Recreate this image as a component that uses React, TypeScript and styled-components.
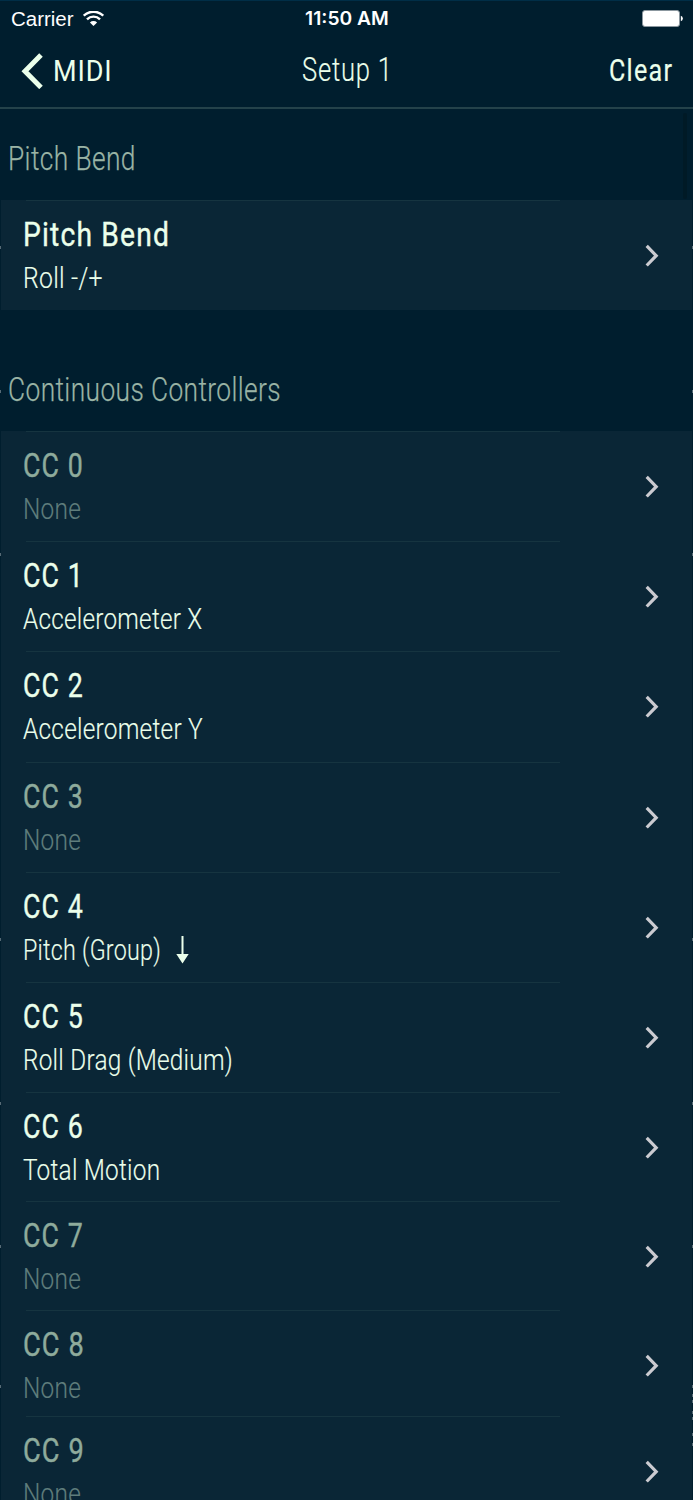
import React, { useLayoutEffect, useRef, useState } from "react";
import styled, { createGlobalStyle } from "styled-components";

const colors = {
  page: "#001e2e",
  row: "#0a2636",
  bright: "#ebffeb",
  section: "#9ab4a5",
  dim: "#8eab9c",
  dimmer: "#5f7d7c",
  line: "#163440",
  chevron: "#cbcbd1",
};

const GlobalStyle = createGlobalStyle`
  * { box-sizing: border-box; }
  html, body { margin: 0; background: ${colors.page}; }
  body { height: 1500px; overflow: hidden; font-family: Roboto, "Liberation Sans", sans-serif; }
`;

const Screen = styled.main`
  position: relative;
  width: 693px;
  height: 1500px;
  overflow: hidden;
  background: ${colors.page};
  border-top: 1px solid #002e47;
`;

const StatusBar = styled.div`
  display: grid;
  grid-template-columns: 1fr auto 1fr;
  align-items: center;
  height: 34px;
  padding: 0 10px 0 11px;
`;

const Carrier = styled.div`
  display: flex;
  align-items: center;
  gap: 9px;
`;

const Clock = styled.div`
  padding-top: 1px;
`;

const BatterySlot = styled.div`
  display: flex;
  justify-content: flex-end;
`;

const NavBar = styled.header`
  display: grid;
  grid-template-columns: 1fr auto 1fr;
  align-items: center;
  height: 74px;
  padding: 0 21px 1px 21px;
  border-bottom: 2px solid #24424a;
`;

const NavTitle = styled.div`
  padding-bottom: 2px;
`;

const NavButton = styled.button<{ $end?: boolean }>`
  display: flex;
  align-items: center;
  justify-self: ${(p) => (p.$end ? "end" : "start")};
  gap: 9px;
  padding: 0;
  border: 0;
  background: none;
  font: inherit;
`;

const SectionHeading = styled.h2<{ $height: number }>`
  display: flex;
  align-items: flex-end;
  height: ${(p) => p.$height}px;
  margin: 0;
  padding: 0 0 20px 7.5px;
`;

const List = styled.ul`
  margin: 0 1px;
  padding: 0;
  list-style: none;
  background: ${colors.row};
`;

const Row = styled.li<{ $height: number }>`
  display: flex;
  align-items: flex-start;
  justify-content: space-between;
  height: ${(p) => p.$height}px;
  padding: 0 32px 0 22px;
  background: linear-gradient(${colors.line}, ${colors.line}) 25px 0 / 534px 1px no-repeat;
`;

const RowText = styled.div`
  display: flex;
  flex-direction: column;
  gap: 6px;
  padding-top: 14px;
`;

const Detail = styled.div`
  display: flex;
  align-items: center;
  gap: 15px;
`;

const ChevronSlot = styled.div`
  display: flex;
  align-items: center;
  height: 112px;
`;

const Label = styled.span<{ $family: string; $size: number; $line: number; $weight: number; $thicken: number; $color: string; $spacing: number; $width: number }>`
  display: block;
  width: ${(p) => p.$width}px;
  height: ${(p) => p.$line}px;
  font-family: ${(p) => p.$family};
  font-size: ${(p) => p.$size}px;
  line-height: ${(p) => p.$line}px;
  font-weight: ${(p) => p.$weight};
  -webkit-text-stroke: ${(p) => p.$thicken}px ${(p) => p.$color};
  letter-spacing: ${(p) => p.$spacing}px;
  color: ${(p) => p.$color};
  white-space: nowrap;
`;

const Condensed = styled.span`
  display: inline-block;
  transform-origin: 0 50%;
`;

const Tick = styled.i<{ $y: number; $right?: boolean }>`
  position: absolute;
  top: ${(p) => p.$y}px;
  ${(p) => (p.$right ? "right: 0;" : "left: 0;")}
  width: 1px;
  height: 3px;
  background: #566a75;
`;

const ScrollShade = styled.div`
  position: absolute;
  top: 112px;
  right: 6px;
  width: 4px;
  height: 86px;
  border-radius: 2px;
  background: #001a26;
`;

const ui = 'Roboto, "Liberation Sans", sans-serif';
const system = '"Liberation Sans", sans-serif';

const kinds = {
  status: { family: system, size: 19.5, line: 34, weight: 400, spacing: 0, thicken: 0 },
  clock: { family: "Inter, sans-serif", size: 19, line: 34, weight: 600, spacing: 0, thicken: 0 },
  nav: { family: ui, size: 30, line: 40, weight: 400, spacing: 1, thicken: 0 },
  navStrong: { family: ui, size: 30.5, line: 40, weight: 400, spacing: 1.5, thicken: 0.2 },
  heading: { family: ui, size: 33, line: 40, weight: 300, spacing: 1, thicken: 0.15 },
  section: { family: ui, size: 34, line: 44, weight: 300, spacing: 0.5, thicken: 0.25 },
  title: { family: ui, size: 34, line: 40, weight: 400, spacing: 1.4, thicken: 0.4 },
  detail: { family: ui, size: 30, line: 36, weight: 300, spacing: 0.3, thicken: 0.15 },
};

type TextProps = { kind: keyof typeof kinds; width: number; color: string; children: string };

/* Narrows a label horizontally so that it fills exactly the given width. */
function FitText({ kind, width, color, children }: TextProps) {
  const ref = useRef<HTMLSpanElement>(null);
  const [scale, setScale] = useState(1);
  const k = kinds[kind];
  useLayoutEffect(() => {
    if (ref.current) setScale(width / (ref.current.offsetWidth - k.spacing));
  }, [width, children, k.spacing]);
  return (
    <Label $family={k.family} $size={k.size} $line={k.line} $weight={k.weight} $thicken={k.thicken} $spacing={k.spacing} $color={color} $width={width}>
      <Condensed ref={ref} style={{ transform: `scaleX(${scale})` }}>{children}</Condensed>
    </Label>
  );
}

const WifiIcon = () => (
  <svg width="21" height="16" viewBox="0 0 21 16" fill="none" stroke="#fff" strokeWidth="2.4">
    <path d="M.8 4.7a13.8 13.8 0 0 1 19.4 0" />
    <path d="M4 8.3a9.2 9.2 0 0 1 13 0" />
    <path d="M10.5 15 6.9 11.5a5.1 5.1 0 0 1 7.2 0z" fill="#fff" stroke="none" />
  </svg>
);

const BatteryIcon = () => (
  <svg width="41" height="17" viewBox="0 0 41 17">
    <rect x="0.5" y="0.5" width="37" height="16" rx="2.5" fill="#fff" stroke="#8b979f" />
    <path d="M38.8 5.8a2.8 2.8 0 0 1 0 5.4z" fill="#fff" />
  </svg>
);

const BackIcon = () => (
  <svg width="23" height="36" viewBox="0 0 23 36" fill="none" stroke={colors.bright} strokeWidth="5">
    <path d="M20 2 4 18.2 20 34.4" />
  </svg>
);

const Chevron = () => (
  <svg width="16" height="24" viewBox="0 0 16 24" fill="none" stroke={colors.chevron} strokeWidth="3.2">
    <path d="M2.7 1.9 12.2 11.7 2.7 21.5" />
  </svg>
);

const DownArrow = () => (
  <svg width="13" height="28" viewBox="0 0 13 28" fill={colors.bright}>
    <path d="M5.5 0h2v18h5.2L6.5 27.5.3 18h5.2z" />
  </svg>
);

type Controller = { title: string; width: number; detail: string; detailWidth: number; off?: boolean; arrow?: boolean; height: number };

const controllers: Controller[] = [
  { title: "CC 0", width: 59.5, detail: "None", detailWidth: 57.5, off: true, height: 110 },
  { title: "CC 1", width: 59.5, detail: "Accelerometer X", detailWidth: 179.5, height: 110 },
  { title: "CC 2", width: 59.5, detail: "Accelerometer Y", detailWidth: 179.5, height: 111 },
  { title: "CC 3", width: 59.5, detail: "None", detailWidth: 57.5, off: true, height: 110 },
  { title: "CC 4", width: 59.5, detail: "Pitch (Group)", detailWidth: 138, arrow: true, height: 110 },
  { title: "CC 5", width: 59.5, detail: "Roll Drag (Medium)", detailWidth: 210, height: 110 },
  { title: "CC 6", width: 59.5, detail: "Total Motion", detailWidth: 137, height: 109 },
  { title: "CC 7", width: 59.5, detail: "None", detailWidth: 57.5, off: true, height: 109 },
  { title: "CC 8", width: 60.5, detail: "None", detailWidth: 57.5, off: true, height: 106 },
  { title: "CC 9", width: 60.5, detail: "None", detailWidth: 57.5, off: true, height: 110 },
];

function ControllerRow({ item }: { item: Controller }) {
  return (
    <Row $height={item.height}>
      <RowText>
        <FitText kind="title" width={item.width} color={item.off ? colors.dim : colors.bright}>{item.title}</FitText>
        <Detail>
          <FitText kind="detail" width={item.detailWidth} color={item.off ? colors.dimmer : colors.bright}>{item.detail}</FitText>
          {item.arrow && <DownArrow />}
        </Detail>
      </RowText>
      <ChevronSlot><Chevron /></ChevronSlot>
    </Row>
  );
}

const ticks = [245, 389, 552, 937, 1101, 1244, 1384];

export default function App() {
  return (
    <Screen>
      <GlobalStyle />
      <StatusBar>
        <Carrier>
          <FitText kind="status" width={63} color="#fff">Carrier</FitText>
          <WifiIcon />
        </Carrier>
        <Clock>
          <FitText kind="clock" width={84} color="#fff">11:50 AM</FitText>
        </Clock>
        <BatterySlot><BatteryIcon /></BatterySlot>
      </StatusBar>
      <NavBar>
        <NavButton>
          <BackIcon />
          <FitText kind="nav" width={58.5} color={colors.bright}>MIDI</FitText>
        </NavButton>
        <NavTitle>
          <FitText kind="heading" width={90} color={colors.bright}>Setup 1</FitText>
        </NavTitle>
        <NavButton $end>
          <FitText kind="navStrong" width={63} color={colors.bright}>Clear</FitText>
        </NavButton>
      </NavBar>
      <SectionHeading $height={91}>
        <FitText kind="section" width={127.5} color={colors.section}>Pitch Bend</FitText>
      </SectionHeading>
      <List>
        <ControllerRow item={{ title: "Pitch Bend", width: 146, detail: "Roll -/+", detailWidth: 80, height: 110 }} />
      </List>
      <SectionHeading $height={121}>
        <FitText kind="section" width={273} color={colors.section}>Continuous Controllers</FitText>
      </SectionHeading>
      <List>
        {controllers.map((c) => <ControllerRow key={c.title} item={c} />)}
      </List>
      <ScrollShade />
      {ticks.map((y) => <Tick key={`l${y}`} $y={y} />)}
      {[...ticks, 1393, 1399, 1410, 1416, 1432, 1442].map((y) => <Tick key={`r${y}`} $y={y} $right />)}
    </Screen>
  );
}
